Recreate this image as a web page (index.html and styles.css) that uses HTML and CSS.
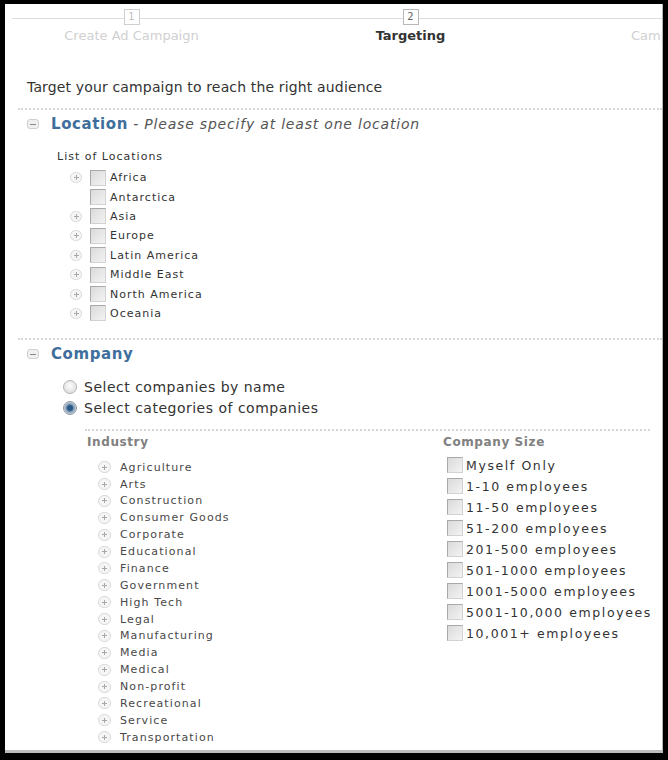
FILE: index.html
```html
<!DOCTYPE html>
<html>
<head>
<meta charset="utf-8">
<title>Targeting</title>
<link rel="stylesheet" href="styles.css">
</head>
<body>
<div class="frame">
  <div class="steps">
    <div class="step done"><span class="num">1</span><span class="step-label">Create Ad Campaign</span></div>
    <div class="step current"><span class="num">2</span><span class="step-label">Targeting</span></div>
    <div class="step next"><span class="num">3</span><span class="step-label">Campaign Budget</span></div>
  </div>

  <p class="intro">Target your campaign to reach the right audience</p>

  <div class="section">
    <div class="section-head">
      <span class="toggle-minus"></span>
      <span class="title">Location</span><span class="hint">&nbsp;- Please specify at least one location</span>
    </div>
    <div class="list-caption">List of Locations</div>
    <ul class="tree">
      <li class="tree-row"><span class="plus"></span><span class="checkbox"></span><span class="loc">Africa</span></li>
      <li class="tree-row"><span class="plus empty"></span><span class="checkbox"></span><span class="loc">Antarctica</span></li>
      <li class="tree-row"><span class="plus"></span><span class="checkbox"></span><span class="loc">Asia</span></li>
      <li class="tree-row"><span class="plus"></span><span class="checkbox"></span><span class="loc">Europe</span></li>
      <li class="tree-row"><span class="plus"></span><span class="checkbox"></span><span class="loc">Latin America</span></li>
      <li class="tree-row"><span class="plus"></span><span class="checkbox"></span><span class="loc">Middle East</span></li>
      <li class="tree-row"><span class="plus"></span><span class="checkbox"></span><span class="loc">North America</span></li>
      <li class="tree-row"><span class="plus"></span><span class="checkbox"></span><span class="loc">Oceania</span></li>
    </ul>
  </div>

  <div class="section company">
    <div class="section-head">
      <span class="toggle-minus"></span>
      <span class="title">Company</span>
    </div>
    <div class="radios">
      <div class="radio-row"><span class="radio"></span>Select companies by name</div>
      <div class="radio-row"><span class="radio on"></span>Select categories of companies</div>
    </div>
    <div class="categories">
      <div class="col">
        <div class="col-head industry-head">Industry</div>
        <ul class="industry-list">
          <li class="ind-row"><span class="plus sm"></span>Agriculture</li>
          <li class="ind-row"><span class="plus sm"></span>Arts</li>
          <li class="ind-row"><span class="plus sm"></span>Construction</li>
          <li class="ind-row"><span class="plus sm"></span>Consumer Goods</li>
          <li class="ind-row"><span class="plus sm"></span>Corporate</li>
          <li class="ind-row"><span class="plus sm"></span>Educational</li>
          <li class="ind-row"><span class="plus sm"></span>Finance</li>
          <li class="ind-row"><span class="plus sm"></span>Government</li>
          <li class="ind-row"><span class="plus sm"></span>High Tech</li>
          <li class="ind-row"><span class="plus sm"></span>Legal</li>
          <li class="ind-row"><span class="plus sm"></span>Manufacturing</li>
          <li class="ind-row"><span class="plus sm"></span>Media</li>
          <li class="ind-row"><span class="plus sm"></span>Medical</li>
          <li class="ind-row"><span class="plus sm"></span>Non-profit</li>
          <li class="ind-row"><span class="plus sm"></span>Recreational</li>
          <li class="ind-row"><span class="plus sm"></span>Service</li>
          <li class="ind-row"><span class="plus sm"></span>Transportation</li>
        </ul>
      </div>
      <div class="col">
        <div class="col-head">Company Size</div>
        <ul class="size-list">
          <li class="size-row"><span class="checkbox"></span>Myself Only</li>
          <li class="size-row"><span class="checkbox"></span>1-10 employees</li>
          <li class="size-row"><span class="checkbox"></span>11-50 employees</li>
          <li class="size-row"><span class="checkbox"></span>51-200 employees</li>
          <li class="size-row"><span class="checkbox"></span>201-500 employees</li>
          <li class="size-row"><span class="checkbox"></span>501-1000 employees</li>
          <li class="size-row"><span class="checkbox"></span>1001-5000 employees</li>
          <li class="size-row"><span class="checkbox"></span>5001-10,000 employees</li>
          <li class="size-row"><span class="checkbox"></span>10,001+ employees</li>
        </ul>
      </div>
    </div>
  </div>
</div>
</body>
</html>
```

FILE: styles.css
```css
html, body {
  margin: 0;
  padding: 0;
  background: #000;
}
body {
  width: 668px;
  height: 760px;
  overflow: hidden;
  font-family: "DejaVu Sans", "Liberation Sans", sans-serif;
  color: #333;
}
ul {
  list-style: none;
  margin: 0;
  padding: 0;
}
p {
  margin: 0;
}

.frame {
  margin: 4px 0 0 5px;
  width: 657px;
  height: 746px;
  background: #fff;
  border-right: 1px solid #b5b5b5;
  border-bottom: 3px solid #bdbdbd;
  overflow: hidden;
}

/* progress steps */
.steps {
  display: flex;
  margin-left: -13px;
  height: 40px;
  background: linear-gradient(#dcdcdc, #dcdcdc) no-repeat 20px 14px / 100% 1px;
}
.step {
  flex: 0 0 279px;
  display: flex;
  flex-direction: column;
  align-items: center;
}
.num {
  margin-top: 5px;
  width: 16px;
  height: 16px;
  box-sizing: border-box;
  border: 1px solid #cfcfcf;
  background: #fff;
  font-size: 10px;
  line-height: 14px;
  text-align: center;
  color: #c0c0c0;
}
.current .num {
  border-color: #b8b8b8;
  color: #666;
}
.step-label {
  margin-top: 3px;
  font-size: 13px;
  line-height: 16px;
  white-space: nowrap;
  color: #d0d0d0;
}
.current .step-label {
  font-weight: bold;
  color: #333;
}

.intro {
  margin: 34px 0 0 22px;
  font-size: 14px;
  line-height: 18px;
  letter-spacing: 0.15px;
  color: #333;
}

/* sections */
.section {
  margin: 12px 0 0 13px;
  border-top: 2px dotted #d6d6d6;
}
.section.company {
  margin-top: 15px;
}
.section-head {
  display: flex;
  align-items: center;
  height: 20px;
  padding: 4px 0 0 9px;
  white-space: nowrap;
}
.toggle-minus {
  flex: none;
  width: 12px;
  height: 10px;
  margin-right: 12px;
  border: 1px solid #d0d0d0;
  border-radius: 3px;
  box-sizing: border-box;
  background: linear-gradient(#8a8a8a, #8a8a8a) center / 6px 1px no-repeat, #f0f0f0;
}
.title {
  font-size: 15px;
  font-weight: bold;
  letter-spacing: 0.6px;
  color: #3f6e9c;
}
.hint {
  font-size: 14px;
  font-style: italic;
  letter-spacing: 0.8px;
  color: #555;
}

.list-caption {
  margin: 15px 0 0 39px;
  font-size: 11px;
  line-height: 16px;
  letter-spacing: 1px;
  color: #333;
}
.tree {
  margin-top: 3px;
  padding-left: 52px;
}
.tree-row {
  display: flex;
  align-items: center;
  height: 19.4px;
  font-size: 11px;
  letter-spacing: 1px;
  color: #333;
}

.plus {
  flex: none;
  width: 12px;
  height: 11px;
  margin-right: 8px;
  box-sizing: border-box;
  border: 1px solid #dadada;
  border-radius: 6px;
  background:
    linear-gradient(#a8a8a8, #a8a8a8) center / 5px 1px no-repeat,
    linear-gradient(#a8a8a8, #a8a8a8) center / 1px 5px no-repeat,
    #f5f5f5;
}
.plus.empty {
  visibility: hidden;
}
.plus.sm {
  width: 13px;
  height: 12px;
  margin-right: 9px;
}

.checkbox {
  flex: none;
  width: 16px;
  height: 16px;
  margin-right: 4px;
  box-sizing: border-box;
  border: 1px solid;
  border-color: #a9a9a9 #d2d2d2 #d2d2d2 #a9a9a9;
  background: linear-gradient(135deg, #dadada, #f3f3f3);
}

/* company */
.radios {
  margin-top: 12px;
  padding-left: 45px;
}
.radio-row {
  display: flex;
  align-items: center;
  height: 21px;
  font-size: 14px;
  letter-spacing: 0.5px;
  color: #333;
}
.radio {
  flex: none;
  width: 14px;
  height: 14px;
  margin-right: 7px;
  box-sizing: border-box;
  border: 1px solid #b3b3b3;
  border-radius: 50%;
  background: radial-gradient(circle at 50% 40%, #fdfdfd, #d6d6d6);
}
.radio.on {
  border-color: #8f9aa6;
  background: radial-gradient(circle, #2c5a88 0 2.5px, #6f8fae 3.5px, #c9d1da 6px);
}

.categories {
  margin: 11px 0 0 67px;
  width: 565px;
  border-top: 2px dotted #d6d6d6;
  display: grid;
  grid-template-columns: 358px 1fr;
}
.col-head {
  padding-top: 3px;
  font-size: 12px;
  line-height: 16px;
  font-weight: bold;
  letter-spacing: 0.6px;
  color: #808080;
}
.industry-head {
  padding-left: 2px;
}
.industry-list {
  margin-top: 8.6px;
  padding-left: 13px;
}
.ind-row {
  display: flex;
  align-items: center;
  height: 16.875px;
  font-size: 11px;
  letter-spacing: 1.1px;
  color: #484848;
}
.size-list {
  margin-top: 4.5px;
  padding-left: 4px;
}
.size-row {
  display: flex;
  align-items: center;
  height: 21px;
  font-size: 12.5px;
  letter-spacing: 1.6px;
  color: #333;
  white-space: nowrap;
}
.size-row .checkbox {
  margin-right: 3px;
}
```
